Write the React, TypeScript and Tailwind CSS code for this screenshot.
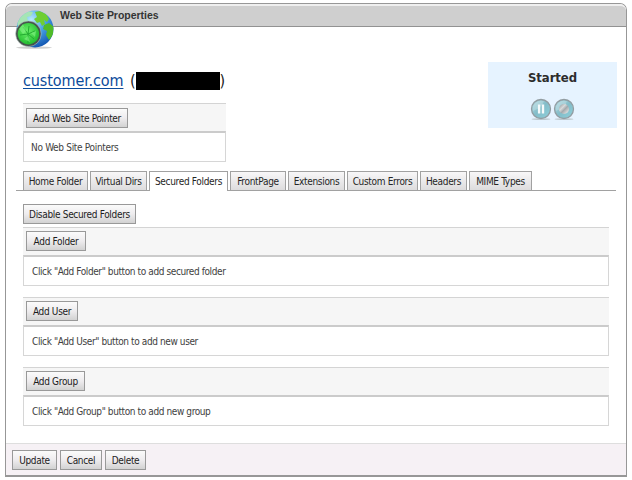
import React from 'react';

const btn =
  'flex shrink-0 items-center justify-center whitespace-nowrap border border-[#999] bg-linear-to-b from-[#fbfbfb] via-[#eeecee] to-[#d2d2d2] pt-[2px] text-[#1c1c1c]';

function Button({ label, className }: { label: string; className: string }) {
  return <button className={`${btn} h-[20px] ${className}`}>{label}</button>;
}

function Section({ action, width, text }: { action: string; width: string; text: string }) {
  return (
    <section className="mb-[11px] h-[59px] w-[586px]">
      <div className="flex h-[28px] items-start border-t border-[#d4d4d4] bg-[#f6f6f6] pt-[3px] pl-[3px]">
        <Button label={action} className={width} />
      </div>
      <div className="flex h-[31px] items-center border border-t-2 border-[#d6d6d6] border-t-[#cbcbcb] pt-[2px] pl-[8px] text-[#414141]">
        <span className="whitespace-nowrap tracking-[-0.4px]">{text}</span>
      </div>
    </section>
  );
}

function GlobeIcon() {
  return (
    <svg className="absolute left-[9px] top-[5px]" width="40" height="42" viewBox="0 0 40 42">
      <defs>
        <radialGradient id="sea" cx="40%" cy="25%" r="75%">
          <stop offset="0" stopColor="#b9e9fb" />
          <stop offset=".5" stopColor="#4aa5e8" />
          <stop offset="1" stopColor="#1559b4" />
        </radialGradient>
        <radialGradient id="lens" cx="45%" cy="40%" r="65%">
          <stop offset="0" stopColor="#6bf06a" />
          <stop offset="1" stopColor="#17b425" />
        </radialGradient>
        <clipPath id="globe"><circle cx="20" cy="20" r="18.5" /></clipPath>
      </defs>
      <ellipse cx="19" cy="38.6" rx="18" ry="1.2" fill="#bbb" opacity=".7" />
      <circle cx="20" cy="20" r="18.5" fill="url(#sea)" />
      <g clipPath="url(#globe)" fill="#6fce32">
        <path d="M2 15 5 7l7-5 6 1-2 4-4 1 1 4-5 3-3 6z" fill="#a5e5b4" />
        <path d="m20 3 5-1 6 3 3 5-2 3-3-2 1 4-3 2-2-4-3 1-3-4 3-2z" />
        <path d="m29 16 5-2 5 4-1 8-4 5-3-5 1-4-4-2z" fill="#50bb28" />
      </g>
      <circle cx="13.4" cy="24.8" r="11.7" fill="url(#lens)" stroke="#46534d" strokeWidth="2" />
      <circle cx="13.4" cy="24.8" r="12.8" fill="none" stroke="#b3c5bd" strokeWidth=".6" />
      <path d="m8 18 5 7m1-8-1 8m7-3-7 3m6 5-6-5m0 9v-9M5 26l8-1" stroke="#24ab32" strokeWidth="1" />
      <path d="m4 20 4-5 3 7-3 3zm12 4 5-2-1 6zM9 30l4-3 2 6z" fill="#8af68b" opacity=".55" />
    </svg>
  );
}

function RoundIcon({ paused }: { paused: boolean }) {
  return (
    <svg width="22" height="23" viewBox="0 0 22 23">
      <defs>
        <linearGradient id="teal" x1="0" y1="0" x2="1" y2="1">
          <stop offset="0" stopColor="#b3d9e0" />
          <stop offset=".5" stopColor="#83bdc9" />
          <stop offset="1" stopColor="#8fd1dc" />
        </linearGradient>
        <linearGradient id="silver" x1="0" y1="0" x2="1" y2="1">
          <stop offset="0" stopColor="#8d9497" />
          <stop offset=".35" stopColor="#d7d9da" />
          <stop offset=".55" stopColor="#a4aaad" />
          <stop offset="1" stopColor="#f5f5f5" />
        </linearGradient>
      </defs>
      <ellipse cx="11" cy="21.2" rx="9.5" ry=".9" fill="#bdc8ce" />
      <circle cx="11" cy="11" r="9.5" fill="url(#teal)" stroke="#939da2" strokeWidth="1.3" />
      <path d="M3 13A8.3 8.3 0 0 1 14 3.3Q12 10 3 13z" fill="#fff" opacity=".22" />
      {paused ? (
        <path d="M9.1 6.6v8.8M13 6.6v8.8" stroke="#f6fafb" strokeWidth="2.4" />
      ) : (
        <circle cx="11" cy="11" r="5" fill="url(#silver)" />
      )}
    </svg>
  );
}

const tabs = [
  ['Home Folder', 'w-[65px]'],
  ['Virtual Dirs', 'w-[57px]'],
  ['Secured Folders', 'w-[79px]'],
  ['FrontPage', 'w-[56px]'],
  ['Extensions', 'w-[57px]'],
  ['Custom Errors', 'w-[71px]'],
  ['Headers', 'w-[47px]'],
  ['MIME Types', 'w-[63px]'],
];

export default function App() {
  return (
    <div className="h-[480px] w-[632px] overflow-hidden bg-white pt-[3px] pl-[5px] font-['DejaVu_Sans_Condensed','DejaVu_Sans',sans-serif] text-[10px] leading-[12px] tracking-[-0.32px] [font-stretch:condensed]">
      <div className="relative flex h-[474px] w-[622px] flex-col rounded-t-[7px] border border-[#979797] border-b-2">
        <header className="h-[23px] shrink-0 rounded-t-[6px] border-t-2 border-b border-t-[#efefef] border-b-[#929292] bg-[#cfcfcf] pt-[4px] pl-[54px] font-['Liberation_Sans',sans-serif] text-[10.5px] leading-[11px] font-bold tracking-[-0.02px] text-[#343434]">
          Web Site Properties
        </header>
        <GlobeIcon />
        <main className="h-[416px] shrink-0 pl-[17px]">
          <div className="flex h-[144px]">
            <div className="w-[465px]">
              <div className="flex h-[76px] items-start pt-[43px] text-[16px] leading-[22px] tracking-[-0.1px] text-[#222]">
                <a className="w-[102px] whitespace-nowrap text-[#0b4b9b] underline decoration-1 underline-offset-2">customer.com</a>
                <span className="ml-[5px]">(</span>
                <span className="mt-[2px] h-[18px] w-[84px] bg-black" />
                <span>)</span>
              </div>
              <section className="h-[59px] w-[203px]">
                <div className="flex h-[28px] items-start border-t border-[#d4d4d4] bg-[#f6f6f6] pt-[4px] pl-[3px]">
                  <Button label="Add Web Site Pointer" className="w-[102px]" />
                </div>
                <div className="flex h-[31px] items-center border border-t-2 border-[#d6d6d6] border-t-[#cbcbcb] pt-[2px] pl-[7px] text-[#414141]">
                  No Web Site Pointers
                </div>
              </section>
            </div>
            <aside className="mt-[35px] flex h-[66px] w-[129px] flex-col items-center bg-[#e6f3ff] pt-[8px]">
              <strong className="text-[13px] leading-[16px] tracking-[-0.1px] text-[#2c2c2c]">Started</strong>
              <div className="mt-[12px] mr-[1px] flex gap-[1px]"><RoundIcon paused /><RoundIcon paused={false} /></div>
            </aside>
          </div>
          <nav className="-ml-[7px] flex h-[20px] w-[600px] gap-[2px] border-b border-[#a1a1a1] pl-[7px]">
            {tabs.map(([label, width], i) => (
              <div key={label} className={`flex shrink-0 items-center justify-center whitespace-nowrap border border-b-0 border-[#a1a1a1] text-[#252525] ${i === 2 ? 'h-[20px] bg-white pt-px' : 'h-[19px] bg-linear-to-b from-[#f8f7f8] to-[#dddcdd] pt-[2px]'} ${width}`}>{label}</div>
            ))}
          </nav>
          <div className="pt-[13px]">
            <Button label="Disable Secured Folders" className="w-[113px]" />
            <div className="pt-[3px]">
              <Section action="Add Folder" width="w-[60px]" text={'Click "Add Folder" button to add secured folder'} />
              <Section action="Add User" width="w-[52px]" text={'Click "Add User" button to add new user'} />
              <Section action="Add Group" width="w-[59px]" text={'Click "Add Group" button to add new group'} />
            </div>
          </div>
        </main>
        <footer className="flex flex-1 items-start gap-[3px] border-t border-[#dedede] bg-[#f6f1f5] pt-[6px] pl-[6px]">
          <Button label="Update" className="w-[45px]" />
          <Button label="Cancel" className="w-[42px]" />
          <Button label="Delete" className="w-[41px]" />
        </footer>
      </div>
    </div>
  );
}
